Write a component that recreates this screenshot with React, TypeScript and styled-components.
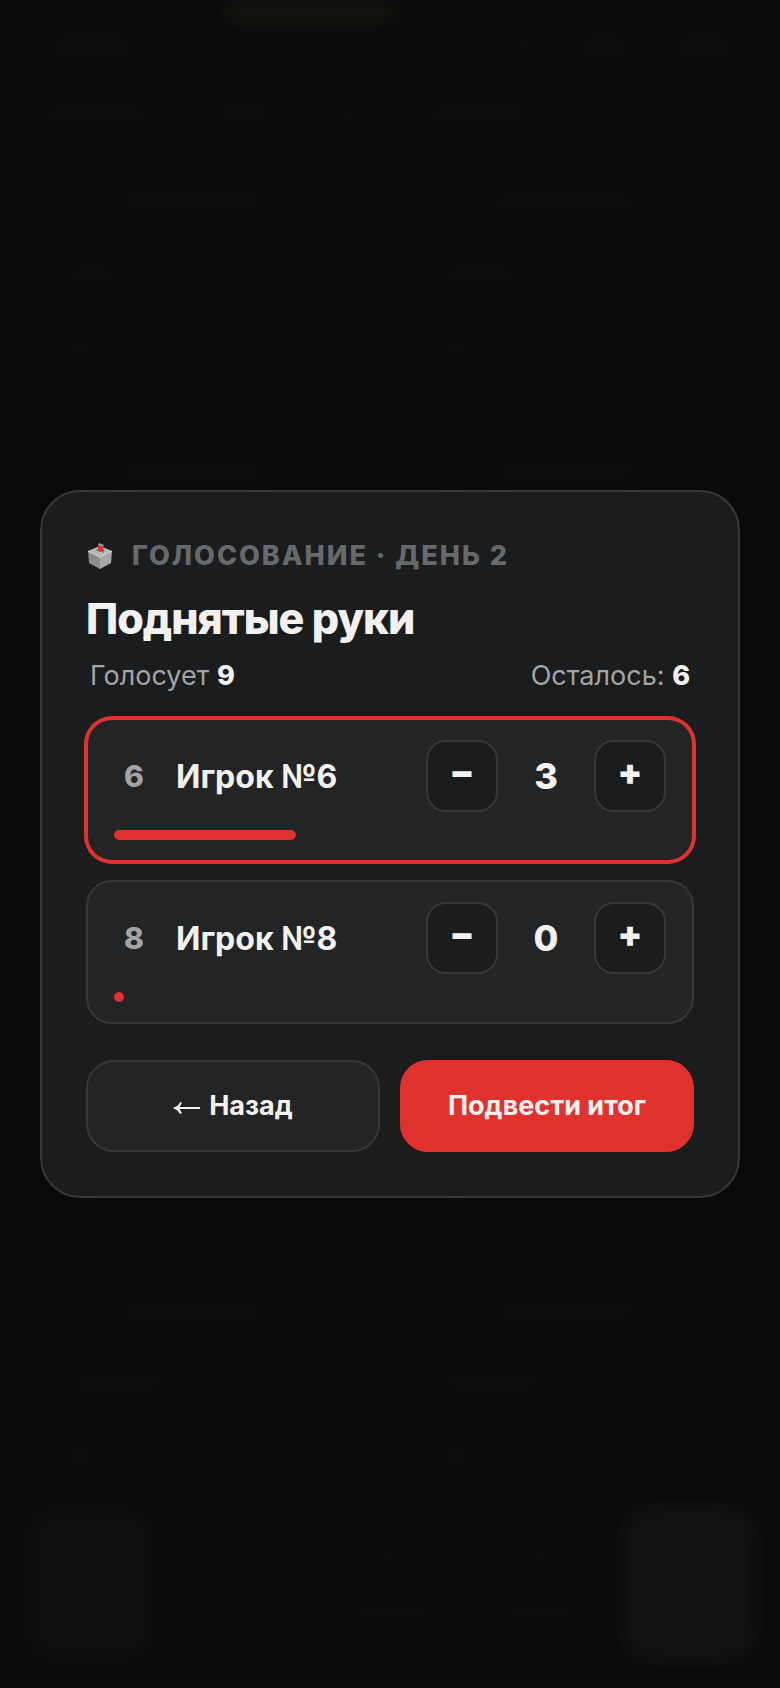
import React, { useState } from "react";
import styled, { createGlobalStyle, css } from "styled-components";

const GlobalStyle = createGlobalStyle`
  *, *::before, *::after { box-sizing: border-box; }
  body {
    margin: 0;
    background: #08090b;
    color: #f3f1ef;
    font-family: Inter, "Liberation Sans", sans-serif;
    -webkit-font-smoothing: antialiased;
  }
`;

/* ---------- dimmed table behind the dialog ---------- */

const Table = styled.div`
  min-height: 100vh;
  display: flex;
  flex-direction: column;
  overflow: hidden;
  padding: 0 20px 24px;
  filter: blur(10px);
`;

const TableHeader = styled.div`
  display: flex;
  align-items: center;
  gap: 36px;
  height: 92px;
  padding: 0 24px;
`;

const Blob = styled.div<{ $w: number; $h?: number; $bright?: boolean }>`
  width: ${(p) => p.$w}px;
  height: ${(p) => p.$h ?? 28}px;
  border-radius: 12px;
  background: ${(p) => (p.$bright ? "#17140f" : "#0f0e0d")};
`;

const Clock = styled(Blob)`
  align-self: flex-start;
  margin: 0 auto 0 44px;
`;

const Chips = styled.div`
  display: flex;
  align-items: center;
  gap: 52px;
  height: 44px;
  padding: 0 16px;
`;

const Seats = styled.div`
  flex: 1;
  display: grid;
  grid-template-columns: 1fr 1fr;
  align-content: start;
  gap: 28px 8px;
  padding-top: 20px;
`;

const Seat = styled.div<{ $tall: boolean }>`
  display: flex;
  flex-direction: column;
  gap: 44px;
  height: ${(p) => (p.$tall ? 252 : 240)}px;
  padding: 32px 36px;
  border-left: 6px solid #0c0c0c;
`;

const SeatLine = styled.div<{ $gap: number }>`
  display: flex;
  gap: ${(p) => p.$gap}px;
`;

const Nav = styled.div`
  display: grid;
  grid-template-columns: repeat(5, 1fr);
  gap: 16px;
  height: 160px;
  padding: 0 4px;
`;

const NavItem = styled.div<{ $tone?: string }>`
  display: flex;
  flex-direction: column;
  align-items: center;
  justify-content: center;
  gap: 28px;
  border-radius: 24px;
  background: ${(p) => p.$tone ?? "transparent"};
`;

/* ---------- dialog ---------- */

const Overlay = styled.div`
  position: fixed;
  inset: 0;
  display: flex;
  align-items: center;
  justify-content: center;
  padding: 40px;
`;

const Dialog = styled.section`
  display: flex;
  flex-direction: column;
  width: 100%;
  max-width: 800px;
  padding: 44px;
  border: 2px solid #363738;
  border-radius: 40px;
  background: #1b1c1e;
`;

const Eyebrow = styled.p`
  display: flex;
  align-items: center;
  gap: 18px;
  margin: 0 0 16px;
  color: #676a6c;
  font-size: 27px;
  font-weight: 800;
  line-height: 40px;
  letter-spacing: 2px;
  text-transform: uppercase;
`;

const Title = styled.h1`
  margin: 0 0 10px;
  font-size: 43px;
  font-weight: 800;
  line-height: 52px;
  letter-spacing: -1px;
`;

const Summary = styled.div`
  display: flex;
  justify-content: space-between;
  margin-bottom: 20px;
  padding: 0 4px;
  color: #a3a4a5;
  font-size: 27px;
  line-height: 44px;

  b {
    color: #f3f1ef;
    font-weight: 800;
  }
`;

const List = styled.ul`
  display: flex;
  flex-direction: column;
  gap: 18px;
  margin: 0 0 36px;
  padding: 0;
  list-style: none;
`;

const Candidate = styled.li<{ $leading: boolean }>`
  display: flex;
  flex-direction: column;
  gap: 18px;
  padding: 20px 26px;
  border: 2px solid #363738;
  border-radius: 26px;
  background: #222425;
  ${(p) =>
    p.$leading &&
    css`
      border-color: #e0322e;
      box-shadow: 0 0 0 2px #e0322e;
    `}
`;

const CandidateRow = styled.div`
  display: flex;
  align-items: center;
`;

const SeatNumber = styled.span`
  width: 40px;
  margin-right: 22px;
  color: #a3a4a5;
  font-size: 30px;
  font-weight: 800;
  text-align: center;
`;

const Name = styled.span`
  flex: 1;
  font-size: 32px;
  font-weight: 700;
`;

const StepButton = styled.button`
  width: 72px;
  height: 72px;
  padding: 0 0 8px;
  border: 2px solid #363738;
  border-radius: 20px;
  background: #1b1c1e;
  color: #f3f1ef;
  font: 900 36px/40px Inter, "Liberation Sans", sans-serif;
  cursor: pointer;
`;

const Votes = styled.output`
  width: 96px;
  font-size: 36px;
  font-weight: 800;
  text-align: center;
`;

const Bar = styled.div`
  height: 10px;
`;

const BarFill = styled.div`
  min-width: 10px;
  height: 10px;
  border-radius: 5px;
  background: #e0322e;
`;

const Actions = styled.div`
  display: grid;
  grid-template-columns: 1fr 1fr;
  gap: 20px;
`;

const ActionButton = styled.button<{ $primary?: boolean }>`
  display: flex;
  align-items: center;
  justify-content: center;
  gap: 8px;
  height: 92px;
  padding: 0 20px;
  border: 2px solid ${(p) => (p.$primary ? "#e0322e" : "#363738")};
  border-radius: 28px;
  background: ${(p) => (p.$primary ? "#e0322e" : "#222425")};
  color: #f3f1ef;
  font: 700 27px/36px Inter, "Liberation Sans", sans-serif;
  cursor: pointer;
`;

const BackArrow = () => (
  <svg width="28" height="18" viewBox="0 0 28 18" aria-hidden="true">
    <path d="M1 11h26" stroke="currentColor" strokeWidth="2" />
    <path d="M0 11Q6 9 7 5l2 1Q7 9 6 11q1 2 3 5l-2 1Q5 13 0 11z" fill="currentColor" />
  </svg>
);

const BallotIcon = () => (
  <svg width="28" height="28" viewBox="0 0 28 28" aria-hidden="true">
    <path d="M2 9 14 4l12 5-12 6z" fill="#b9b9b9" />
    <path d="M2 9l12 6v12L3 21z" fill="#8d8d8d" />
    <path d="M26 9l-12 6v12l11-6z" fill="#a9a9a9" />
    <path d="M2 9l12 6 12-6" fill="none" stroke="#dcdcdc" strokeWidth="1" />
    <path d="M10 8l5-2 4 2-5 2z" fill="#5a5a5a" />
    <path d="M12 3l5 2 1 6-3-2-3-1z" fill="#e8322d" />
    <path d="M12 3l1-2 5 2-1 2z" fill="#9a9a9a" />
  </svg>
);

const seatLines = [60, 90, 60, 90, 70, 80, 70, 80, 110, 110];

const TableBehind = () => (
  <Table aria-hidden="true">
    <TableHeader>
      <Blob $w={96} $h={36} />
      <Clock $w={180} $h={24} $bright />
      <Blob $w={36} />
      <Blob $w={60} $h={36} />
      <Blob $w={64} $h={36} />
    </TableHeader>
    <Chips>
      <Blob $w={120} />
      <Blob $w={72} />
      <Blob $w={36} />
      <Blob $w={116} />
    </Chips>
    <Seats>
      {seatLines.map((w, i) => (
        <Seat key={i} $tall={i > 1 && i < seatLines.length - 2}>
          <SeatLine $gap={20}>
            <Blob $w={30} />
            <Blob $w={160} />
          </SeatLine>
          <Blob $w={w} />
          <SeatLine $gap={76}>
            <Blob $w={40} $h={32} />
            <Blob $w={30} $h={24} />
          </SeatLine>
        </Seat>
      ))}
    </Seats>
    <Nav>
      <NavItem $tone="#100f0d" />
      <NavItem $tone="#0b0c0d" />
      <NavItem>
        <Blob $w={36} />
        <Blob $w={84} />
      </NavItem>
      <NavItem>
        <Blob $w={36} />
        <Blob $w={84} />
      </NavItem>
      <NavItem $tone="#121212" />
    </Nav>
  </Table>
);

const VOTERS = 9;

export default function App() {
  const [votes, setVotes] = useState<Record<number, number>>({ 6: 3, 8: 0 });
  const seats = [6, 8];
  const left = VOTERS - seats.reduce((sum, s) => sum + votes[s], 0);
  const top = Math.max(...seats.map((s) => votes[s]));

  const change = (seat: number, delta: number) => {
    const next = votes[seat] + delta;
    if (next < 0 || left - delta < 0) return;
    setVotes({ ...votes, [seat]: next });
  };

  return (
    <>
      <GlobalStyle />
      <TableBehind />
      <Overlay>
        <Dialog role="dialog" aria-modal="true" aria-labelledby="vote-title">
          <Eyebrow>
            <BallotIcon />
            <span>Голосование · День 2</span>
          </Eyebrow>
          <Title id="vote-title">Поднятые руки</Title>
          <Summary>
            <span>
              Голосует <b>{VOTERS}</b>
            </span>
            <span>
              Осталось: <b>{left}</b>
            </span>
          </Summary>
          <List>
            {seats.map((seat) => (
              <Candidate key={seat} $leading={top > 0 && votes[seat] === top}>
                <CandidateRow>
                  <SeatNumber>{seat}</SeatNumber>
                  <Name>Игрок №{seat}</Name>
                  <StepButton
                    type="button"
                    aria-label={`Убрать голос, игрок ${seat}`}
                    onClick={() => change(seat, -1)}
                  >
                    −
                  </StepButton>
                  <Votes>{votes[seat]}</Votes>
                  <StepButton
                    type="button"
                    aria-label={`Добавить голос, игрок ${seat}`}
                    onClick={() => change(seat, 1)}
                  >
                    +
                  </StepButton>
                </CandidateRow>
                <Bar>
                  <BarFill
                    style={{
                      width: `${Math.round((votes[seat] / VOTERS) * 100)}%`,
                    }}
                  />
                </Bar>
              </Candidate>
            ))}
          </List>
          <Actions>
            <ActionButton type="button">
              <BackArrow />
              <span>Назад</span>
            </ActionButton>
            <ActionButton type="button" $primary>
              Подвести итог
            </ActionButton>
          </Actions>
        </Dialog>
      </Overlay>
    </>
  );
}
